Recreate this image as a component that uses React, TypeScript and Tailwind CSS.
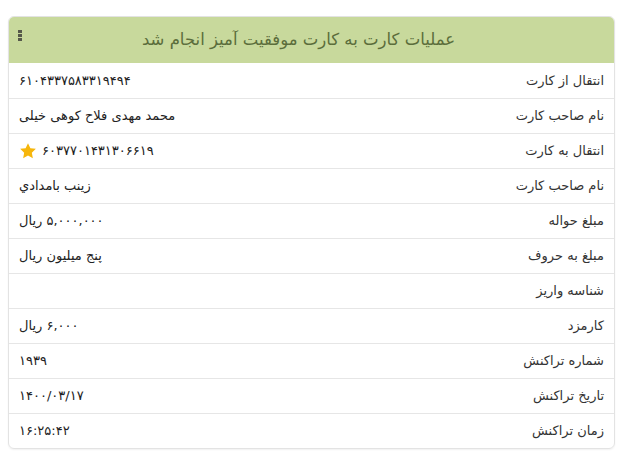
import type { ReactNode } from 'react';

// ============================================
// رسید کارت به کارت
// ============================================

interface Row {
  label: string;
  value: ReactNode;
}

const Star = () => (
  <svg width="18" height="18" viewBox="0 0 24 24" className="shrink-0">
    <path
      d="M12 1.5l3.2 6.7 7.3.9-5.4 5.1 1.4 7.3L12 18l-6.5 3.5 1.4-7.3-5.4-5.1 7.3-.9z"
      fill="#f6b60c"
    />
  </svg>
);

const rows: Row[] = [
  { label: 'انتقال از کارت', value: '۶۱۰۴۳۳۷۵۸۳۳۱۹۴۹۴' },
  { label: 'نام صاحب کارت', value: 'محمد مهدی فلاح کوهی خیلی' },
  {
    label: 'انتقال به کارت',
    value: (
      <span className="flex items-center gap-[5px]">
        <span>۶۰۳۷۷۰۱۴۳۱۳۰۶۶۱۹</span>
        <Star />
      </span>
    ),
  },
  { label: 'نام صاحب کارت', value: 'زینب بامدادي' },
  { label: 'مبلغ حواله', value: '۵,۰۰۰,۰۰۰ ریال' },
  { label: 'مبلغ به حروف', value: 'پنج میلیون ریال' },
  { label: 'شناسه واریز', value: '' },
  { label: 'کارمزد', value: '۶,۰۰۰ ریال' },
  { label: 'شماره تراکنش', value: '۱۹۳۹' },
  { label: 'تاریخ تراکنش', value: '۱۴۰۰/۰۳/۱۷' },
  { label: 'زمان تراکنش', value: '۱۶:۲۵:۴۲' },
];

export default function App() {
  return (
    <div
      className="min-h-[461px] bg-white pl-2 pt-4"
      style={{ fontFamily: '"DejaVu Sans", "Noto Sans", sans-serif' }}
    >
      <div className="w-[607px] rounded-md border border-[#e3e3e3] overflow-hidden shadow-[0_1px_2px_rgba(0,0,0,0.06)]">
        {/* هدر */}
        <div className="relative h-[46px] bg-[#c8d99c] flex items-center justify-center">
          <div className="absolute left-[9px] top-[13px] flex flex-col gap-[1px]">
            <span className="w-[4px] h-[3px] bg-[#55584a]" />
            <span className="w-[4px] h-[3px] bg-[#55584a]" />
            <span className="w-[4px] h-[3px] bg-[#55584a]" />
          </div>
          <h2 dir="rtl" className="text-[16.5px] text-[#5b6d3b] pr-[26px]">
            عملیات کارت به کارت موفقیت آمیز انجام شد
          </h2>
        </div>

        {/* ردیف‌ها */}
        <div dir="rtl">
          {rows.map((row, i) => (
            <div
              key={i}
              className={`h-[35px] flex items-center justify-between px-[10px] text-[13px] ${
                i > 0 ? 'border-t border-[#e6e6e6]' : ''
              }`}
            >
              <span className="text-[#333]">{row.label}</span>
              <span className="text-[#222]">{row.value}</span>
            </div>
          ))}
        </div>
      </div>
    </div>
  );
}
